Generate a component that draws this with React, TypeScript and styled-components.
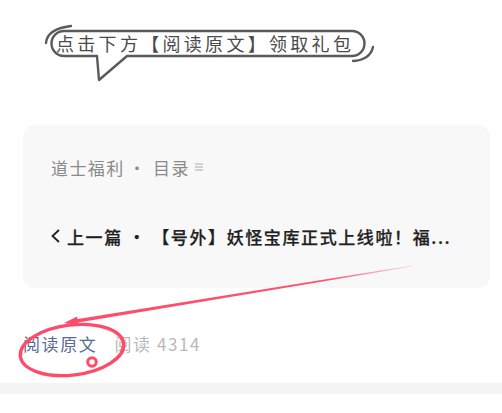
import React from "react";
import styled, { createGlobalStyle } from "styled-components";

const GlobalStyle = createGlobalStyle`
  html, body {
    margin: 0;
    padding: 0;
    background: #ffffff;
  }
  body {
    font-family: "Noto Sans CJK SC", "Liberation Sans", sans-serif;
  }
`;

const ACCENT = "#ff4a68";

const Page = styled.div`
  position: relative;
  width: 502px;
  height: 413px;
  overflow: hidden;
  background: #ffffff;
`;

const BubbleBlock = styled.div`
  position: relative;
  height: 100px;
  padding: 33px 0 0 56px;
  box-sizing: border-box;
`;

const BubbleFrame = styled.svg`
  position: absolute;
  left: 0;
  top: 0;
`;

const BubbleText = styled.div`
  position: relative;
  font-size: 18px;
  line-height: 20px;
  letter-spacing: 3.3px;
  color: #4a4a4a;
  white-space: nowrap;
`;

const Card = styled.div`
  margin: 25px 12px 0 23px;
  height: 163px;
  box-sizing: border-box;
  padding: 30px 28px 0;
  background: #f8f8f8;
  border-radius: 12px;
  display: flex;
  flex-direction: column;
  gap: 45px;
`;

const AlbumRow = styled.div`
  display: flex;
  align-items: center;
  height: 24px;
  font-size: 17px;
  letter-spacing: 1.4px;
  color: #8a8a8a;
  white-space: nowrap;
`;

const Dot = styled.span`
  margin: 0 6px 0 4px;
`;

const MenuIcon = styled.svg`
  margin-left: 5px;
`;

const PrevRow = styled.div`
  display: flex;
  align-items: center;
  height: 24px;
  font-size: 17px;
  font-weight: 500;
  letter-spacing: 1.6px;
  color: #1f1f1f;
  white-space: nowrap;
  -webkit-text-stroke: 0.25px #1f1f1f;
`;

const Chevron = styled.svg`
  margin-right: 7px;
`;

const Footer = styled.div`
  display: flex;
  align-items: center;
  gap: 17px;
  height: 24px;
  margin: 43px 0 0 23px;
  font-size: 17px;
  letter-spacing: 1.6px;
  white-space: nowrap;
`;

const FooterText = styled.span<{ $link?: boolean }>`
  color: ${(p) => (p.$link ? "#576b95" : "#b8b8b8")};
`;

const Band = styled.div`
  margin-top: 28px;
  height: 11px;
  background: #f4f4f4;
`;

const Marks = styled.svg`
  position: absolute;
  left: 0;
  top: 0;
  pointer-events: none;
`;

const App: React.FC = () => {
  return (
    <Page>
      <GlobalStyle />
      <BubbleBlock>
        <BubbleFrame width="502" height="100" viewBox="0 0 502 100">
          <path
            d="M97 56 H64 A12.5 12.5 0 0 1 64 31 H352 A12.5 12.5 0 0 1 352 56 H127 L99 80 Z"
            fill="#ffffff"
            stroke="#5a5a5a"
            strokeWidth="2.4"
            strokeLinejoin="round"
          />
          <path d="M46 43 Q47 29 71 26" fill="none" stroke="#5a5a5a" strokeWidth="2.4" strokeLinecap="round" />
          <path d="M353 61 Q370 60 373 47" fill="none" stroke="#5a5a5a" strokeWidth="2.4" strokeLinecap="round" />
        </BubbleFrame>
        <BubbleText>点击下方【阅读原文】领取礼包</BubbleText>
      </BubbleBlock>

      <Card>
        <AlbumRow>
          道士福利<Dot>·</Dot>目录
          <MenuIcon width="8" height="8" viewBox="0 0 8 8">
            <path d="M0 1 H8 M0 4 H8 M0 7 H8" stroke="#a8a8a8" strokeWidth="1.2" />
          </MenuIcon>
        </AlbumRow>
        <PrevRow>
          <Chevron width="9" height="14" viewBox="0 0 9 14">
            <path d="M8 1 L1.5 7 L8 13" fill="none" stroke="#1f1f1f" strokeWidth="1.8" />
          </Chevron>
          上一篇 · 【号外】妖怪宝库正式上线啦！福...
        </PrevRow>
      </Card>

      <Footer>
        <FooterText $link>阅读原文</FooterText>
        <FooterText>阅读 4314</FooterText>
      </Footer>
      <Band />

      <Marks width="502" height="413" viewBox="0 0 502 413">
        <defs>
          <linearGradient id="fade" x1="72" y1="322" x2="412" y2="266" gradientUnits="userSpaceOnUse">
            <stop offset="0" stopColor={ACCENT} stopOpacity="1" />
            <stop offset="0.75" stopColor={ACCENT} stopOpacity="0.95" />
            <stop offset="1" stopColor={ACCENT} stopOpacity="0.15" />
          </linearGradient>
        </defs>
        <polygon points="412.1,266.4 72.3,323.4 71.7,320 411.9,265.6" fill="url(#fade)" />
        <polygon points="64,323 78.5,325.6 77.1,316.6" fill={ACCENT} />
        <ellipse
          cx="72"
          cy="350"
          rx="52"
          ry="25"
          transform="rotate(-7 72 350)"
          fill="none"
          stroke={ACCENT}
          strokeWidth="3.4"
        />
        <circle cx="92" cy="362" r="4.3" fill="none" stroke={ACCENT} strokeWidth="3" />
      </Marks>
    </Page>
  );
};

export default App;
